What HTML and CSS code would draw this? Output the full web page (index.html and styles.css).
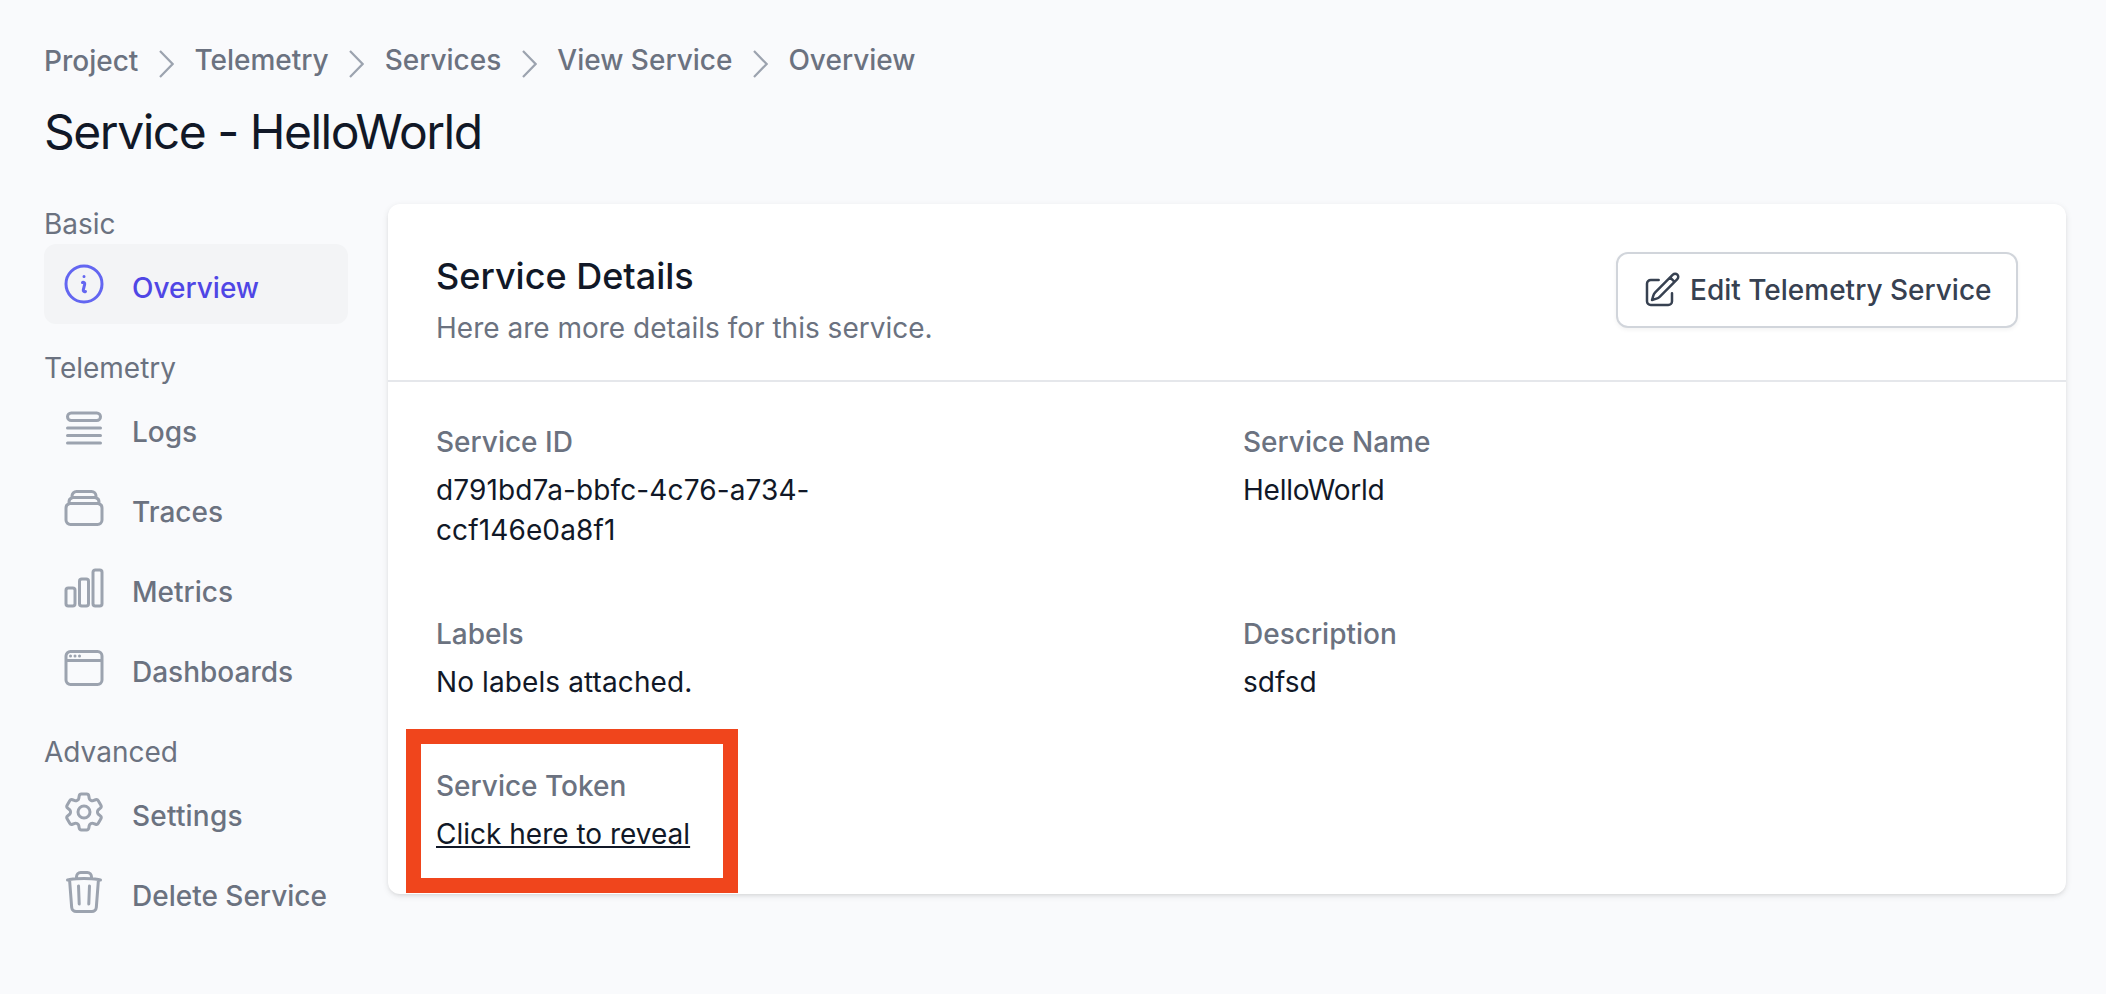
FILE: index.html
```html
<!DOCTYPE html>
<html lang="en">
<head>
<meta charset="utf-8">
<title>Service - HelloWorld</title>
<link rel="stylesheet" href="styles.css">
</head>
<body>
<header class="page-header">
  <nav class="breadcrumbs">
    <a class="crumb crumb-first">Project</a>
    <svg class="chevron" viewBox="0 0 15 28"><path d="M1 1l12.6 13L1 27"/></svg>
    <a class="crumb">Telemetry</a>
    <svg class="chevron" viewBox="0 0 15 28"><path d="M1 1l12.6 13L1 27"/></svg>
    <a class="crumb">Services</a>
    <svg class="chevron" viewBox="0 0 15 28"><path d="M1 1l12.6 13L1 27"/></svg>
    <a class="crumb">View Service</a>
    <svg class="chevron" viewBox="0 0 15 28"><path d="M1 1l12.6 13L1 27"/></svg>
    <a class="crumb">Overview</a>
  </nav>
  <h1 class="page-title">Service - HelloWorld</h1>
</header>
<div class="layout">
  <aside class="sidebar">
    <section class="nav-group">
      <h2 class="nav-heading">Basic</h2>
      <a class="nav-item active"><svg class="icon" viewBox="0 0 24 24"><path d="M11.25 11.25l.041-.02a.75.75 0 011.063.852l-.708 2.836a.75.75 0 001.063.853l.041-.021M21 12a9 9 0 11-18 0 9 9 0 0118 0zm-9-3.75h.008v.008H12V8.25z"/></svg><span class="nav-label">Overview</span></a>
    </section>
    <section class="nav-group">
      <h2 class="nav-heading">Telemetry</h2>
      <a class="nav-item"><svg class="icon" viewBox="0 0 24 24"><path d="M3.75 12h16.5m-16.5 3.75h16.5M3.75 19.5h16.5M5.625 4.5h12.75a1.875 1.875 0 010 3.75H5.625a1.875 1.875 0 010-3.75z"/></svg><span class="nav-label">Logs</span></a>
      <a class="nav-item"><svg class="icon" viewBox="0 0 24 24"><path d="M6 6.878V6a2.25 2.25 0 012.25-2.25h7.5A2.25 2.25 0 0118 6v.878m-12 0c.235-.083.487-.128.75-.128h10.5c.263 0 .515.045.75.128m-12 0A2.25 2.25 0 004.5 9v.878m13.5-3A2.25 2.25 0 0119.5 9v.878m0 0a2.246 2.246 0 00-.75-.128H5.25c-.263 0-.515.045-.75.128m15 0A2.25 2.25 0 0121 12v6a2.25 2.25 0 01-2.25 2.25H5.25A2.25 2.25 0 013 18v-6c0-.98.626-1.813 1.5-2.122"/></svg><span class="nav-label">Traces</span></a>
      <a class="nav-item"><svg class="icon" viewBox="0 0 24 24"><path d="M3 13.125C3 12.504 3.504 12 4.125 12h2.25c.621 0 1.125.504 1.125 1.125v6.75C7.5 20.496 6.996 21 6.375 21h-2.25A1.125 1.125 0 013 19.875v-6.75zM9.75 8.625c0-.621.504-1.125 1.125-1.125h2.25c.621 0 1.125.504 1.125 1.125v11.25c0 .621-.504 1.125-1.125 1.125h-2.25a1.125 1.125 0 01-1.125-1.125V8.625zM16.5 4.125c0-.621.504-1.125 1.125-1.125h2.25C20.496 3 21 3.504 21 4.125v15.75c0 .621-.504 1.125-1.125 1.125h-2.25a1.125 1.125 0 01-1.125-1.125V4.125z"/></svg><span class="nav-label">Metrics</span></a>
      <a class="nav-item"><svg class="icon" viewBox="0 0 24 24"><path d="M3 8.25V18a2.25 2.25 0 002.25 2.25h13.5A2.25 2.25 0 0021 18V8.25m-18 0V6a2.25 2.25 0 012.25-2.25h13.5A2.25 2.25 0 0121 6v2.25m-18 0h18M5.25 6h.008v.008H5.25V6zM7.5 6h.008v.008H7.5V6zm2.25 0h.008v.008H9.75V6z"/></svg><span class="nav-label">Dashboards</span></a>
    </section>
    <section class="nav-group">
      <h2 class="nav-heading">Advanced</h2>
      <a class="nav-item"><svg class="icon" viewBox="0 0 24 24"><path d="M9.594 3.94c.09-.542.56-.94 1.11-.94h2.593c.55 0 1.02.398 1.11.94l.213 1.281c.063.374.313.686.645.87.074.04.147.083.22.127.324.196.72.257 1.075.124l1.217-.456a1.125 1.125 0 011.37.49l1.296 2.247a1.125 1.125 0 01-.26 1.431l-1.003.827c-.293.24-.438.613-.431.992a6.759 6.759 0 010 .255c-.007.378.138.75.43.99l1.005.828c.424.35.534.954.26 1.43l-1.298 2.247a1.125 1.125 0 01-1.369.491l-1.217-.456c-.355-.133-.75-.072-1.076.124a6.57 6.57 0 01-.22.128c-.331.183-.581.495-.644.869l-.213 1.28c-.09.543-.56.941-1.11.941h-2.594c-.55 0-1.02-.398-1.11-.94l-.213-1.281c-.062-.374-.312-.686-.644-.87a6.52 6.52 0 01-.22-.127c-.325-.196-.72-.257-1.076-.124l-1.217.456a1.125 1.125 0 01-1.369-.49l-1.297-2.247a1.125 1.125 0 01.26-1.431l1.004-.827c.292-.24.437-.613.43-.992a6.932 6.932 0 010-.255c.007-.378-.138-.75-.43-.99l-1.004-.828a1.125 1.125 0 01-.26-1.43l1.297-2.247a1.125 1.125 0 011.37-.491l1.216.456c.356.133.751.072 1.076-.124.072-.044.146-.087.22-.128.332-.183.582-.495.644-.869l.214-1.281z"/><path d="M15 12a3 3 0 11-6 0 3 3 0 016 0z"/></svg><span class="nav-label nav-label-wide">Settings</span></a>
      <a class="nav-item"><svg class="icon" viewBox="0 0 24 24"><path d="M14.74 9l-.346 9m-4.788 0L9.26 9m9.968-3.21c.342.052.682.107 1.022.166m-1.022-.165L18.16 19.673a2.25 2.25 0 01-2.244 2.077H8.084a2.25 2.25 0 01-2.244-2.077L4.772 5.79m14.456 0a48.108 48.108 0 00-3.478-.397m-12 .562c.34-.059.68-.114 1.022-.165m0 0a48.11 48.11 0 013.478-.397m7.5 0v-.916c0-1.18-.91-2.164-2.09-2.201a51.964 51.964 0 00-3.32 0c-1.18.037-2.09 1.022-2.09 2.201v.916m7.5 0a48.667 48.667 0 00-7.5 0"/></svg><span class="nav-label">Delete Service</span></a>
    </section>
  </aside>
  <main class="card">
    <div class="card-header">
      <div>
        <h2 class="card-title">Service Details</h2>
        <p class="card-subtitle">Here are more details for this service.</p>
      </div>
      <button class="edit-button" type="button"><svg class="edit-icon" viewBox="0 0 24 24"><path d="M16.862 4.487l1.687-1.688a1.875 1.875 0 112.652 2.652L10.582 16.07a4.5 4.5 0 01-1.897 1.13L6 18l.8-2.685a4.5 4.5 0 011.13-1.897l8.932-8.931zm0 0L19.5 7.125M18 14v4.75A2.25 2.25 0 0115.75 21H5.25A2.25 2.25 0 013 18.75V8.25A2.25 2.25 0 015.25 6H10"/></svg><span>Edit Telemetry Service</span></button>
    </div>
    <dl class="details">
      <div class="field"><dt>Service ID</dt><dd class="service-id">d791bd7a-bbfc-4c76-a734-ccf146e0a8f1</dd></div>
      <div class="field"><dt>Service Name</dt><dd class="service-name">HelloWorld</dd></div>
      <div class="field"><dt>Labels</dt><dd class="labels">No labels attached.</dd></div>
      <div class="field"><dt>Description</dt><dd>sdfsd</dd></div>
      <div class="field token"><dt>Service Token</dt><dd><a class="reveal">Click here to reveal</a></dd></div>
    </dl>
  </main>
</div>
</body>
</html>
```
FILE: styles.css
```css
*, *::after { box-sizing: border-box; }
body, h1, h2, p, dl, dt, dd { margin: 0; }
body {
  min-height: 994px;
  padding: 40px 40px 0 44px;
  background: #f9fafc;
  color: #111827;
  font: 400 28px/40px Inter, "Liberation Sans", sans-serif;
}
.page-header { height: 164px; }
.breadcrumbs { display: flex; align-items: flex-start; gap: 20.5px; }
.crumb { color: #6b7280; font-weight: 500; }
.crumb-first { padding-top: 1px; }
.chevron {
  width: 15px;
  height: 28px;
  margin-top: 10px;
  fill: none;
  stroke: #9ca3af;
  stroke-width: 2.2;
}
.page-title {
  margin-top: 19px;
  font-size: 48px;
  font-weight: 400;
  line-height: 64px;
  letter-spacing: -0.031em;
}
.layout { display: flex; align-items: flex-start; gap: 40px; }
.sidebar { width: 304px; display: flex; flex-direction: column; gap: 24px; }
.nav-heading { color: #6b7280; font-size: 28px; font-weight: 400; }
.nav-item {
  display: flex;
  align-items: center;
  gap: 24px;
  height: 80px;
  padding: 0 16px;
  border-radius: 12px;
  color: #6b7280;
  font-weight: 500;
  white-space: nowrap;
}
.nav-label { padding-top: 8px; }
.nav-label-wide { letter-spacing: .2px; }
.icon, .edit-icon {
  flex: none;
  width: 48px;
  height: 48px;
  fill: none;
  stroke: #9ca3af;
  stroke-width: 1.5;
  stroke-linecap: round;
  stroke-linejoin: round;
}
.active { background: #f3f4f6; color: #4f46e5; }
.active .icon { stroke: #6366f1; }
.card {
  flex: 1;
  border-radius: 12px;
  background: #fff;
  box-shadow: 0 2px 6px rgb(0 0 0 / .1), 0 2px 4px -2px rgb(0 0 0 / .1);
}
.card-header {
  display: flex;
  justify-content: space-between;
  align-items: flex-start;
  height: 178px;
  padding: 48px 48px 0;
  border-bottom: 2px solid #e5e7eb;
}
.card-title { font-size: 36px; font-weight: 500; line-height: 48px; }
.card-subtitle { margin-top: 8px; color: #6b7280; }
.edit-button {
  display: flex;
  align-items: center;
  gap: 8px;
  width: 402px;
  height: 76px;
  padding: 0 24px;
  border: 2px solid #d1d5db;
  border-radius: 12px;
  background: #fff;
  box-shadow: 0 2px 4px rgb(0 0 0 / .05);
  color: #374151;
  font: 500 28px/40px Inter, "Liberation Sans", sans-serif;
  white-space: nowrap;
}
.edit-icon { width: 40px; height: 40px; stroke: #374151; }
.details {
  display: grid;
  grid-template-columns: 1fr 1fr;
  gap: 64px 32px;
  padding: 40px 48px;
}
.field { position: relative; }
dt { color: #6b7280; font-weight: 500; }
dd { margin-top: 8px; }
.service-id { width: 388px; letter-spacing: .12px; }
.service-name { letter-spacing: -.25px; }
.labels { letter-spacing: .1px; }
.reveal {
  text-decoration: underline;
  text-decoration-thickness: 2px;
  text-underline-offset: 2px;
  text-decoration-skip-ink: none;
}
/* highlight frame drawn over the token field */
.token::after {
  content: "";
  position: absolute;
  top: -37px;
  left: -30px;
  width: 332px;
  height: 164px;
  border: 15px solid #f0451c;
}
```
